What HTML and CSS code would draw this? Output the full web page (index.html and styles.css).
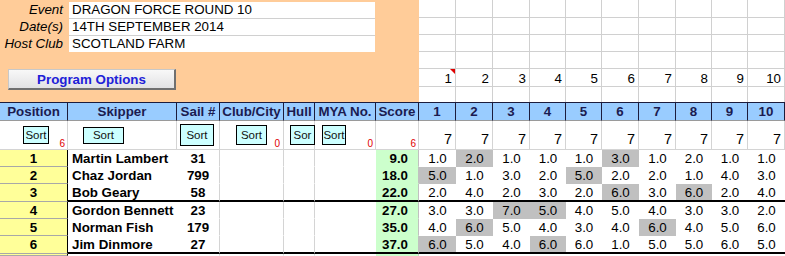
FILE: index.html
```html
<!DOCTYPE html>
<html>
<head>
<meta charset="utf-8">
<link rel="stylesheet" href="styles.css">
</head>
<body>
<div class="sheet">
  <div class="panel">
    <div class="info">
      <div class="lbl">Event</div><div class="val">DRAGON FORCE ROUND 10</div>
      <div class="lbl">Date(s)</div><div class="val">14TH SEPTEMBER 2014</div>
      <div class="lbl">Host Club</div><div class="val last">SCOTLAND FARM</div>
    </div>
    <button class="opt">Program Options</button>
  </div>

  <!-- grid rows above the table -->
  <div class="g"></div><div class="g"></div><div class="g"></div><div class="g"></div><div class="g"></div><div class="g"></div><div class="g"></div><div class="g"></div><div class="g"></div><div class="g"></div>
  <div class="g"></div><div class="g"></div><div class="g"></div><div class="g"></div><div class="g"></div><div class="g"></div><div class="g"></div><div class="g"></div><div class="g"></div><div class="g"></div>
  <div class="g"></div><div class="g"></div><div class="g"></div><div class="g"></div><div class="g"></div><div class="g"></div><div class="g"></div><div class="g"></div><div class="g"></div><div class="g"></div>
  <div class="g"></div><div class="g"></div><div class="g"></div><div class="g"></div><div class="g"></div><div class="g"></div><div class="g"></div><div class="g"></div><div class="g"></div><div class="g"></div>
  <div class="g num note">1</div><div class="g num">2</div><div class="g num">3</div><div class="g num">4</div><div class="g num">5</div><div class="g num">6</div><div class="g num">7</div><div class="g num">8</div><div class="g num">9</div><div class="g num">10</div>
  <div class="g b0"></div><div class="g b0"></div><div class="g b0"></div><div class="g b0"></div><div class="g b0"></div><div class="g b0"></div><div class="g b0"></div><div class="g b0"></div><div class="g b0"></div><div class="g b0"></div>

  <!-- header -->
  <div class="h">Position</div><div class="h">Skipper</div><div class="h">Sail #</div><div class="h">Club/City</div><div class="h">Hull</div><div class="h">MYA No.</div><div class="h">Score</div>
  <div class="h">1</div><div class="h">2</div><div class="h">3</div><div class="h">4</div><div class="h">5</div><div class="h">6</div><div class="h">7</div><div class="h">8</div><div class="h">9</div><div class="h">10</div>

  <!-- sort row -->
  <div class="s sp"><span class="sb b-pos">Sort</span><span class="rn">6</span></div>
  <div class="s ss"><span class="sb b-skip">Sort</span></div>
  <div class="s sa"><span class="sb b-sail">Sort</span></div>
  <div class="s sc"><span class="sb b-club">Sort</span><span class="rn">0</span></div>
  <div class="s sh"><span class="sb b-hull">Sor</span></div>
  <div class="s sm"><span class="sb b-mya">Sort</span><span class="rn">0</span></div>
  <div class="s sx"><span class="rn">6</span></div>
  <div class="s sr">7</div><div class="s sr">7</div><div class="s sr">7</div><div class="s sr">7</div><div class="s sr">7</div><div class="s sr">7</div><div class="s sr">7</div><div class="s sr">7</div><div class="s sr">7</div><div class="s sr">7</div>

  <!-- row 1 -->
  <div class="d p">1</div><div class="d nm">Martin Lambert</div><div class="d sl">31</div><div class="d ln"></div><div class="d ln"></div><div class="d"></div><div class="d sc-v">9.0</div>
  <div class="d r">1.0</div><div class="d r x">2.0</div><div class="d r">1.0</div><div class="d r">1.0</div><div class="d r">1.0</div><div class="d r x">3.0</div><div class="d r">1.0</div><div class="d r">2.0</div><div class="d r">1.0</div><div class="d r">1.0</div>
  <!-- row 2 -->
  <div class="d p">2</div><div class="d nm">Chaz Jordan</div><div class="d sl">799</div><div class="d ln"></div><div class="d ln"></div><div class="d"></div><div class="d sc-v">18.0</div>
  <div class="d r x">5.0</div><div class="d r">1.0</div><div class="d r">3.0</div><div class="d r">2.0</div><div class="d r x">5.0</div><div class="d r">2.0</div><div class="d r">2.0</div><div class="d r">1.0</div><div class="d r">4.0</div><div class="d r">3.0</div>
  <!-- row 3 -->
  <div class="d p">3</div><div class="d nm t">Bob Geary</div><div class="d sl t">58</div><div class="d ln t"></div><div class="d ln t"></div><div class="d t"></div><div class="d sc-v t">22.0</div>
  <div class="d r t">2.0</div><div class="d r t">4.0</div><div class="d r t">2.0</div><div class="d r t">3.0</div><div class="d r t">2.0</div><div class="d r x t">6.0</div><div class="d r t">3.0</div><div class="d r x t">6.0</div><div class="d r t">2.0</div><div class="d r t">4.0</div>
  <!-- row 4 -->
  <div class="d p">4</div><div class="d nm">Gordon Bennett</div><div class="d sl">23</div><div class="d ln"></div><div class="d ln"></div><div class="d"></div><div class="d sc-v">27.0</div>
  <div class="d r">3.0</div><div class="d r">3.0</div><div class="d r x">7.0</div><div class="d r x">5.0</div><div class="d r">4.0</div><div class="d r">5.0</div><div class="d r">4.0</div><div class="d r">3.0</div><div class="d r">3.0</div><div class="d r">2.0</div>
  <!-- row 5 -->
  <div class="d p">5</div><div class="d nm">Norman Fish</div><div class="d sl">179</div><div class="d ln"></div><div class="d ln"></div><div class="d"></div><div class="d sc-v">35.0</div>
  <div class="d r">4.0</div><div class="d r x">6.0</div><div class="d r">5.0</div><div class="d r">4.0</div><div class="d r">3.0</div><div class="d r">4.0</div><div class="d r x">6.0</div><div class="d r">4.0</div><div class="d r">5.0</div><div class="d r">6.0</div>
  <!-- row 6 -->
  <div class="d p">6</div><div class="d nm t">Jim Dinmore</div><div class="d sl t">27</div><div class="d ln t"></div><div class="d ln t"></div><div class="d t"></div><div class="d sc-v t">37.0</div>
  <div class="d r x t">6.0</div><div class="d r t">5.0</div><div class="d r t">4.0</div><div class="d r x t">6.0</div><div class="d r t">6.0</div><div class="d r t">1.0</div><div class="d r t">5.0</div><div class="d r t">5.0</div><div class="d r t">6.0</div><div class="d r t">5.0</div>
  <!-- row 7 (top edge visible) -->
  <div class="d p"></div><div class="d"></div><div class="d sl"></div><div class="d ln"></div><div class="d ln"></div><div class="d"></div><div class="d sc-v"></div>
  <div class="d r"></div><div class="d r"></div><div class="d r"></div><div class="d r"></div><div class="d r"></div><div class="d r"></div><div class="d r"></div><div class="d r"></div><div class="d r"></div><div class="d r"></div>
</div>
</body>
</html>
```
FILE: styles.css
```css
* { box-sizing: border-box; }

body {
  margin: 0;
  background: #fff;
  color: #000;
  font-family: "Liberation Sans", Arial, sans-serif;
  font-size: 13.33px;
  overflow: hidden;
}

.sheet {
  display: grid;
  width: 785px;
  height: 256px;
  overflow: hidden;
  grid-template-columns: 68px 109px 43px 64px 31px 61px 43px 37px 37px 37px 36px 36px 37px 37px 36px 36px 37px;
  grid-template-rows: 18px 17px 17px 17px 18px 15px 19px 29px 17px 17px 18px 17px 17px 18px 2px;
}

/* top orange panel */
.panel {
  grid-column: 1 / 8;
  grid-row: 1 / 7;
  background: #ffcc99;
  padding-top: 2px;
  display: flex;
  flex-direction: column;
  align-items: flex-start;
}

.info {
  display: grid;
  grid-template-columns: 69px 306px;
  grid-template-rows: 17px 17px 16px;
}

.lbl {
  font-style: italic;
  text-align: right;
  padding-right: 6px;
  line-height: 16px;
}

.val {
  background: #fff;
  padding-left: 3px;
  line-height: 16px;
  border-bottom: 1px solid #d0d0d0;
}
.val.last { border-bottom: none; }

.opt {
  margin: 17px 0 0 8px;
  width: 168px;
  height: 21px;
  padding: 0;
  font-family: inherit;
  font-size: 13.33px;
  font-weight: bold;
  color: #2020d8;
  background: linear-gradient(#f8f8f8, #e2e2e4);
  border-top: 1px solid #c8c8c8;
  border-left: 1px solid #c8c8c8;
  border-right: 2px solid #707070;
  border-bottom: 2px solid #707070;
}

/* plain grid cells above table */
.g {
  border-right: 1px solid #d0d0d0;
  border-bottom: 1px solid #d0d0d0;
}
.g.b0 { border-bottom: none; }
.g.num {
  display: flex;
  justify-content: flex-end;
  align-items: flex-end;
  padding-right: 3px;
  line-height: 14px;
}
.g.note { position: relative; }
.g.note::after {
  content: "";
  position: absolute;
  top: 0;
  right: 0;
  width: 0;
  height: 0;
  border-top: 5px solid #e00000;
  border-left: 5px solid transparent;
}

/* header row */
.h {
  background: #99ccff;
  border-top: 1px solid #1c1c3c;
  border-right: 1px solid #1c1c3c;
  border-bottom: 1px solid #9a9a9a;
  font-weight: bold;
  color: #1b1b50;
  text-align: center;
  line-height: 17px;
  white-space: nowrap;
}

/* sort row */
.s {
  display: flex;
  align-items: center;
  border-right: 1px solid #d4d4d4;
  border-bottom: 1px solid #d4d4d4;
  white-space: nowrap;
}
.sb {
  display: flex;
  align-items: center;
  justify-content: center;
  flex: none;
  background: #ccffff;
  border: 1px solid #000;
  font-size: 11.5px;
  color: #111;
  overflow: hidden;
}
.b-pos { width: 26px; height: 18px; }
.b-skip { width: 41px; height: 17px; }
.b-sail { width: 34px; height: 22px; }
.b-club { width: 31px; height: 20px; }
.b-hull { width: 25px; height: 20px; }
.b-mya { width: 24px; height: 20px; }

.sp { padding-left: 23px; padding-right: 2px; }
.ss { padding-left: 15px; }
.sa { padding-left: 3px; }
.sc { padding-left: 16px; padding-right: 3px; }
.sh { padding-left: 6px; }
.sm { padding-left: 7px; padding-right: 2px; }
.sx { padding-right: 2px; }

.rn {
  margin-left: auto;
  align-self: flex-end;
  color: #e00000;
  font-size: 10px;
}

.sr {
  justify-content: flex-end;
  align-items: flex-end;
  padding: 0 3px 2px 0;
  font-size: 14.5px;
}

/* data rows */
.d {
  display: flex;
  align-items: center;
  border-bottom: 1px solid transparent;
  white-space: nowrap;
}
.d.p {
  background: #ffff99;
  border-right: 1px solid #000;
  border-bottom: 1px solid #a8a8a8;
  justify-content: center;
  font-weight: bold;
}
.d.nm { padding-left: 4px; font-weight: bold; }
.d.sl { justify-content: center; font-weight: bold; border-right: 1px solid #d4d4d4; }
.d.ln { border-right: 1px solid #d4d4d4; }
.d.sc-v {
  background: #ccffcc;
  justify-content: flex-end;
  padding-right: 10px;
  font-weight: bold;
  border-right: 1px solid #c0c0c0;
}
.d.r { justify-content: center; }
.d.x { background: #c0c0c0; }
.d.t { border-bottom: 2px solid #000; }
```
